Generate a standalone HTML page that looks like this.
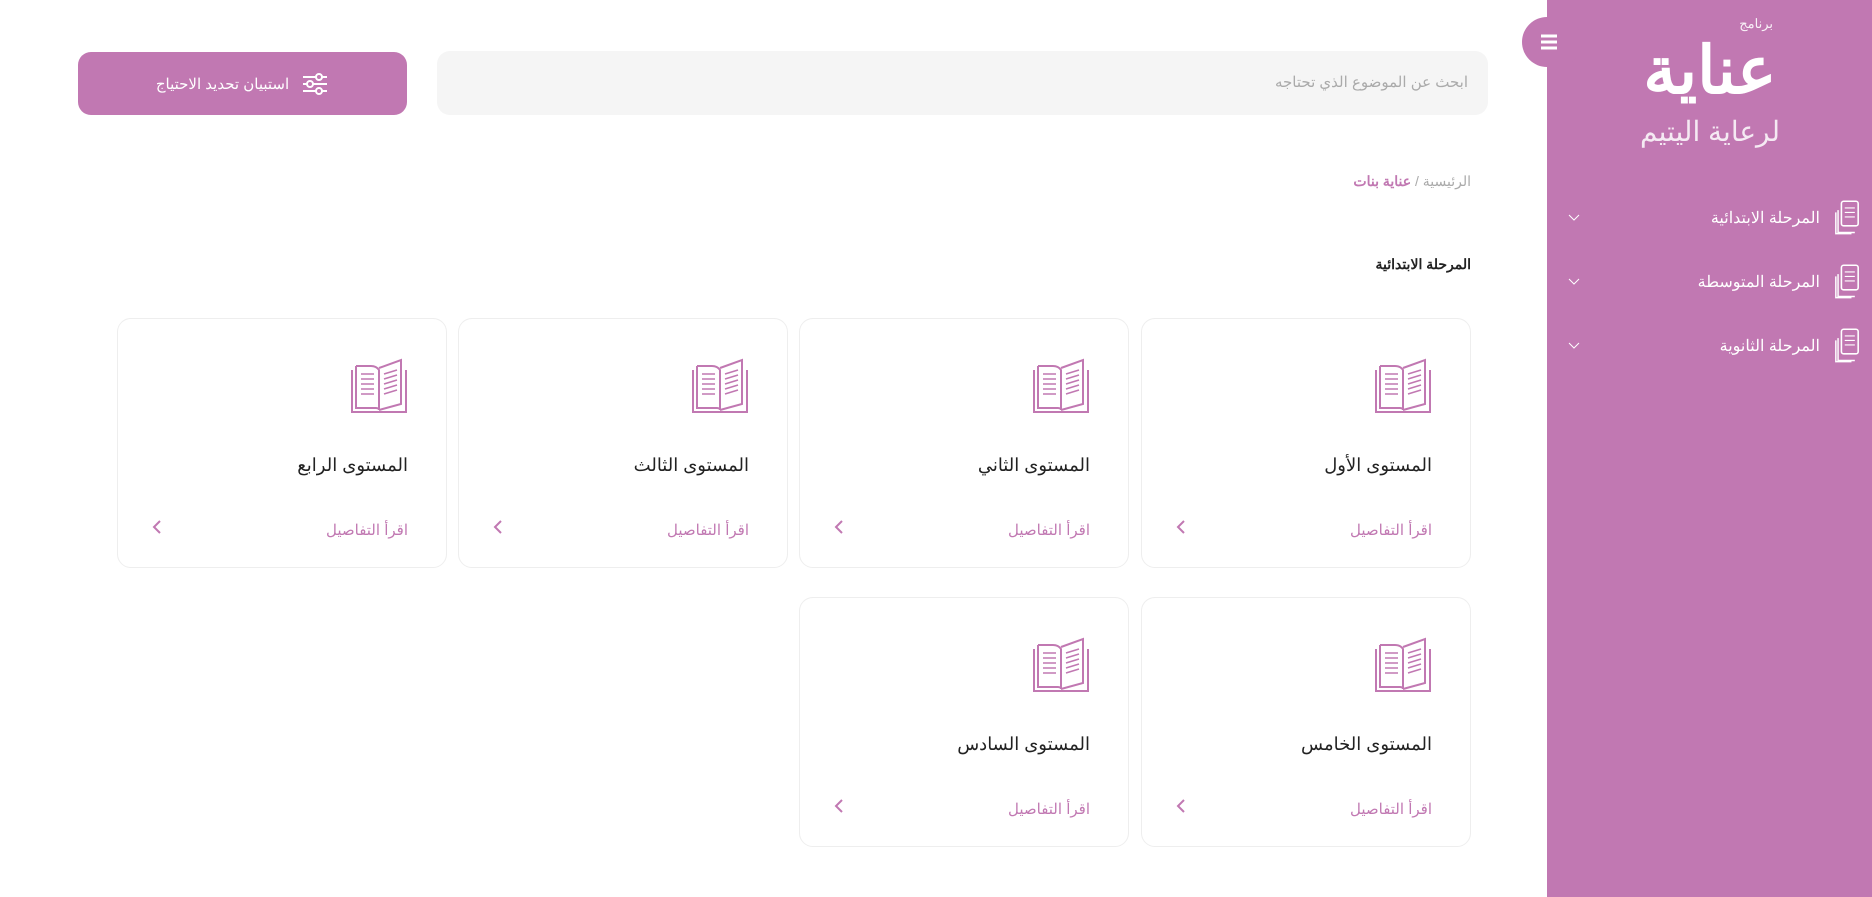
<!DOCTYPE html>
<html dir="rtl"><head><meta charset="utf-8"><style>
*{box-sizing:border-box;margin:0;padding:0}
body{width:1872px;height:897px;background:#fff;font-family:"Liberation Sans","Noto Sans CJK SC",sans-serif;position:relative;overflow:hidden}
.abs{position:absolute}
.side{left:1547px;top:0;width:325px;height:897px;background:#c178b2}
.tog{left:1522px;top:17px;width:60px;height:50px;border-radius:25px;background:#c178b2}
.menu{right:10px;width:294px;height:40px;color:#fff;font-size:16px;display:flex;align-items:center}
.card{width:330px;height:250px;border:1px solid #eee;border-radius:14px;background:#fff}
.card svg.book{position:absolute;right:38px;top:39px}
.card .t{position:absolute;right:38px;top:136px;font-size:18px;color:#222}
.card .r{position:absolute;right:38px;top:202px;font-size:15px;color:#c178b2}
.card .c{position:absolute;left:34px;top:200px}
</style></head><body>
<div class="abs side"></div>
<div class="abs tog"><svg style="position:absolute;left:18px;top:17px" width="18" height="16"><path d="M1 2h16M1 8h16M1 14h16" stroke="#fff" stroke-width="3"/></svg></div>
<div class="abs" style="left:1625px;top:16px;width:170px;height:145px;color:#fff;text-align:center">
<div style="font-size:13px;text-align:right;padding-right:22px;opacity:.9">برنامج</div>
<div style="font-size:66px;font-weight:bold;line-height:80px;font-family:'Liberation Serif','Noto Serif CJK SC',serif">عناية</div>
<div style="font-size:28px;opacity:.85;line-height:40px">لرعاية اليتيم</div>
</div>
<div class="abs menu" style="top:198px"><svg width="30" height="38" viewBox="0 0 24 34"><rect x="7" y="2" width="15" height="22" fill="none" stroke="#fff" stroke-width="1.4" rx="2"/><path d="M10 8h9M10 12h9M10 16h9" stroke="#fff"/><path d="M4 10v20h15M2 12v19h14" fill="none" stroke="#fff" stroke-width="1.3"/></svg><span style="margin-right:12px">المرحلة الابتدائية</span><svg style="margin-right:auto" width="12" height="8"><path d="M1 1l5 5 5-5" stroke="#fff" fill="none"/></svg></div>
<div class="abs menu" style="top:262px"><svg width="30" height="38" viewBox="0 0 24 34"><rect x="7" y="2" width="15" height="22" fill="none" stroke="#fff" stroke-width="1.4" rx="2"/><path d="M10 8h9M10 12h9M10 16h9" stroke="#fff"/><path d="M4 10v20h15M2 12v19h14" fill="none" stroke="#fff" stroke-width="1.3"/></svg><span style="margin-right:12px">المرحلة المتوسطة</span><svg style="margin-right:auto" width="12" height="8"><path d="M1 1l5 5 5-5" stroke="#fff" fill="none"/></svg></div>
<div class="abs menu" style="top:326px"><svg width="30" height="38" viewBox="0 0 24 34"><rect x="7" y="2" width="15" height="22" fill="none" stroke="#fff" stroke-width="1.4" rx="2"/><path d="M10 8h9M10 12h9M10 16h9" stroke="#fff"/><path d="M4 10v20h15M2 12v19h14" fill="none" stroke="#fff" stroke-width="1.3"/></svg><span style="margin-right:12px">المرحلة الثانوية</span><svg style="margin-right:auto" width="12" height="8"><path d="M1 1l5 5 5-5" stroke="#fff" fill="none"/></svg></div>

<div class="abs" style="left:437px;top:51px;width:1051px;height:64px;background:#f5f5f5;border-radius:13px;color:#aaa;font-size:15px;line-height:64px;padding-right:20px">ابحث عن الموضوع الذي تحتاجه</div>
<div class="abs" style="left:78px;top:52px;width:329px;height:63px;background:#c178b2;border-radius:13px;color:#fff;font-size:15px;display:flex;align-items:center;justify-content:center;gap:12px">
<svg width="28" height="24"><path d="M2 5h24M2 12h24M2 19h24" stroke="#fff" stroke-width="2"/><circle cx="18" cy="5" r="3" fill="#c178b2" stroke="#fff" stroke-width="2"/><circle cx="9" cy="12" r="3" fill="#c178b2" stroke="#fff" stroke-width="2"/><circle cx="18" cy="19" r="3" fill="#c178b2" stroke="#fff" stroke-width="2"/></svg><span>استبيان تحديد الاحتياج</span></div>

<div class="abs" style="right:401px;top:173px;font-size:14px;color:#aaa">الرئيسية / <b style="color:#c178b2">عناية بنات</b></div>
<div class="abs" style="right:401px;top:256px;font-size:14px;font-weight:bold;color:#222">المرحلة الابتدائية</div>

<div id="cards"></div>
<script>
var pos=[[1141,318,"المستوى الأول"],[799,318,"المستوى الثاني"],[458,318,"المستوى الثالث"],[117,318,"المستوى الرابع"],[1141,597,"المستوى الخامس"],[799,597,"المستوى السادس"]];
var book='<svg class="book" width="58" height="56" viewBox="0 0 58 56" fill="none" stroke="#c178b2" stroke-width="2"><path d="M2 12v42h54V12"/><path d="M6 8v42h20c2 0 3 1 3 2"/><path d="M29 52V12c-2-3-5-4-8-4H6"/><path d="M29 52l22-6V2L29 10"/><path d="M11 16h13M11 21h13M11 26h13M11 31h13M11 36h13" stroke-width="1.6"/><path d="M34 16l13-4M34 21l13-4M34 26l13-4M34 31l13-4M34 36l13-4" stroke-width="1.6"/></svg>';
var h='';pos.forEach(function(p){h+='<div class="abs card" style="left:'+p[0]+'px;top:'+p[1]+'px">'+book+'<div class="t">'+p[2]+'</div><div class="r">اقرأ التفاصيل</div><svg class="c" width="10" height="16"><path d="M8 2L2 8l6 6" stroke="#c178b2" stroke-width="2" fill="none"/></svg></div>';});
document.getElementById('cards').innerHTML=h;
</script>
</body></html>
